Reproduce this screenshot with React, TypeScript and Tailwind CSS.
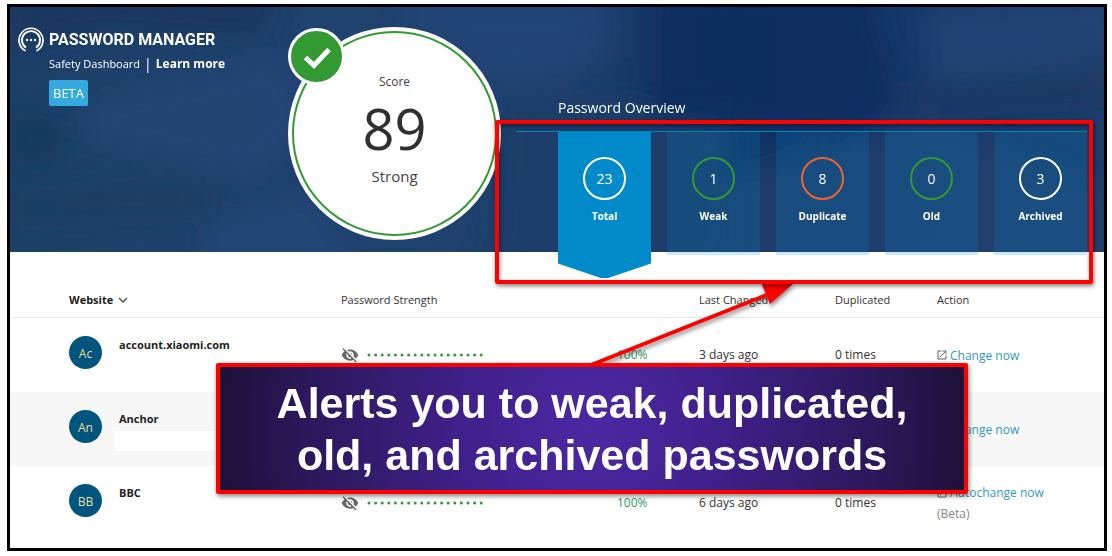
import { MdKeyboardArrowDown, MdVisibilityOff } from "react-icons/md";

type Tab = { count: number; label: string; ring: string; active?: boolean };

type Row = {
  initials: string;
  name: string;
  masked?: boolean;
  strength?: string;
  changed?: string;
  duplicated?: string;
  action: string;
  note?: string;
};

const tabs: Tab[] = [
  { count: 23, label: "Total", ring: "border-white", active: true },
  { count: 1, label: "Weak", ring: "border-[#339933]" },
  { count: 8, label: "Duplicate", ring: "border-[#f0622f]" },
  { count: 0, label: "Old", ring: "border-[#339933]" },
  { count: 3, label: "Archived", ring: "border-white" },
];

const rows: Row[] = [
  {
    initials: "Ac",
    name: "account.xiaomi.com",
    strength: "100%",
    changed: "3 days ago",
    duplicated: "0 times",
    action: "Change now",
  },
  { initials: "An", name: "Anchor", masked: true, action: "Change now" },
  {
    initials: "BB",
    name: "BBC",
    strength: "100%",
    changed: "6 days ago",
    duplicated: "0 times",
    action: "Autochange now",
    note: "(Beta)",
  },
];

function Backdrop() {
  return (
    <svg
      className="absolute inset-0 size-full"
      viewBox="0 0 1094 244"
      preserveAspectRatio="none"
      aria-hidden="true"
    >
      <defs>
        <linearGradient id="sky" x1="0" y1="0" x2="1" y2="0">
          <stop offset="0" stopColor="#1d4068" />
          <stop offset="0.3" stopColor="#20426f" />
          <stop offset="0.5" stopColor="#1f406c" />
          <stop offset="0.65" stopColor="#123364" />
          <stop offset="0.8" stopColor="#17386a" />
          <stop offset="1" stopColor="#1d3d6b" />
        </linearGradient>
        <filter id="soft" x="-20%" y="-20%" width="140%" height="140%">
          <feGaussianBlur stdDeviation="12" />
        </filter>
      </defs>
      <rect width="1094" height="244" fill="url(#sky)" />
      <g filter="url(#soft)">
        <path d="M0 -20H270L250 30L90 20L0 40Z" fill="#173560" opacity=".8" />
        <path d="M80 95L270 50L300 110L250 170L70 130Z" fill="#25487a" opacity=".6" />
        <path d="M0 100L60 115L50 150L0 160Z" fill="#16365c" opacity=".7" />
        <path d="M0 190L180 170L220 205L0 215Z" fill="#183a62" opacity=".7" />
        <path d="M200 215L300 190L340 260H190Z" fill="#24487a" opacity=".7" />
        <path d="M390 -10H600V50L500 80L400 30Z" fill="#25477a" opacity=".7" />
        <path d="M490 95H720V260H480Z" fill="#1d3c69" />
        <path d="M640 -20H860L890 90L850 130L640 110Z" fill="#0f2e5e" opacity=".9" />
        <path d="M915 5L1110 -10V45L1000 85L925 80Z" fill="#254777" opacity=".7" />
        <path d="M900 75L1110 60V90L900 105Z" fill="#17375f" opacity=".7" />
        <path d="M720 170L920 110L1110 190V260H720Z" fill="#24416f" opacity=".6" />
      </g>
    </svg>
  );
}

function BrandMark() {
  return (
    <svg className="size-[26px] shrink-0" viewBox="0 0 26 26" fill="none" stroke="white" aria-hidden="true">
      <path d="M7.5 23.9A12 12 0 1 1 18.5 23.9" strokeWidth="1.7" />
      <path d="M8 20.6A9 9 0 1 1 18 20.6" strokeWidth="1.9" />
      <g fill="white" stroke="none">
        <circle cx="9" cy="13" r="1.2" />
        <circle cx="13" cy="13" r="1.2" />
        <circle cx="17" cy="13" r="1.2" />
      </g>
    </svg>
  );
}

function Brand() {
  return (
    <div className="flex w-[278px] shrink-0 items-start gap-[5px] pl-2 text-white">
      <BrandMark />
      <div>
        <h1 className="font-[Roboto] text-[16px] leading-[25px] font-bold">PASSWORD MANAGER</h1>
        <p className="flex items-center gap-1 leading-6 whitespace-nowrap">
          <span className="text-[11px]">Safety Dashboard</span>
          <span className="text-[14px]">|</span>
          <a href="#learn" className="text-[12px] font-bold">Learn more</a>
        </p>
        <span className="mt-1 inline-block rounded-[2px] bg-[#34aae1] px-1 text-[13px] leading-[26px]">BETA</span>
      </div>
    </div>
  );
}

function Score() {
  return (
    <div className="relative size-[213px] shrink-0 rounded-full bg-white p-1">
      <div className="flex size-full flex-col items-center rounded-full border-2 border-[#339933] pt-[37px] text-[#444]">
        <span className="text-[12px] leading-6">Score</span>
        <strong className="text-[56px] leading-[68px] font-normal text-[#303030]">89</strong>
        <span className="text-[15px] leading-7">Strong</span>
      </div>
      <span className="absolute top-px left-0 flex size-[57px] items-center justify-center rounded-full border-3 border-white bg-[#339933]">
        <svg className="size-8" viewBox="0 0 32 32" fill="none" stroke="white" strokeWidth="5" aria-hidden="true">
          <path d="M4.5 16.5L13 24.5L28 8.5" />
        </svg>
      </span>
    </div>
  );
}

function Overview() {
  return (
    <section className="mr-[17px] -mb-[40px] ml-[15px] grow pt-[69px] text-white">
      <h2 className="mb-[11px] pl-[42px] text-[14px] leading-6">Password Overview</h2>
      <div className="flex items-start gap-4 border-t border-[#0083c4] pl-[42px]">
        {tabs.map((tab) => (
          <button
            key={tab.label}
            type="button"
            className={
              tab.active
                ? "flex h-[146px] flex-1 basis-0 flex-col items-center bg-[#008ac9] pt-[25px] [clip-path:polygon(0_0,100%_0,100%_90%,54%_100%,46%_100%,0_90%)]"
                : "flex h-[123px] flex-1 basis-0 flex-col items-center bg-[#008ac9]/20 pt-[25px]"
            }
          >
            <span className={`flex size-[43px] items-center justify-center rounded-full border-2 text-[14px] ${tab.ring}`}>
              {tab.count}
            </span>
            <span className="mt-2 text-[10px] leading-4 font-bold">{tab.label}</span>
          </button>
        ))}
      </div>
    </section>
  );
}

function Dots() {
  return (
    <svg className="h-1 w-[118px]" viewBox="0 0 118 4" fill="#339933" role="img" aria-label="Hidden password">
      {Array.from({ length: 18 }, (_, i) => (
        <circle key={i} cx={2 + i * 6.6} cy="2" r="1.5" />
      ))}
    </svg>
  );
}

function OpenIcon() {
  return (
    <svg className="size-[10px] shrink-0" viewBox="0 0 10 10" fill="none" stroke="#666" aria-hidden="true">
      <path d="M4.5 1H1V9H9V5.5M5.5 1H9V4.5M3 7L8.5 1.5" />
    </svg>
  );
}

function SiteTable() {
  return (
    <table className="w-full table-fixed text-left text-[12px] text-[#333]">
      <colgroup>
        <col className="w-[331px]" />
        <col className="w-[276px]" />
        <col className="w-[82px]" />
        <col className="w-[136px]" />
        <col className="w-[102px]" />
        <col />
      </colgroup>
      <thead>
        <tr className="border-b border-[#e6e6e6] text-[11px] leading-[18px]">
          <th className="pt-[39px] pb-2 pl-[59px]">
            <button type="button" className="flex items-center font-bold text-[#222]">
              Website <MdKeyboardArrowDown className="ml-px size-[18px] text-[#555]" />
            </button>
          </th>
          <th className="pt-[39px] pb-2 font-normal" colSpan={2}>Password Strength</th>
          <th className="pt-[39px] pb-2 font-normal">Last Changed</th>
          <th className="pt-[39px] pb-2 font-normal">Duplicated</th>
          <th className="pt-[39px] pb-2 font-normal">Action</th>
        </tr>
      </thead>
      <tbody>
        {rows.map((row) => (
          <tr key={row.name} className="h-[74px] even:bg-[#f7f7f7]">
            <td className="pb-[5px] pl-[59px]">
              <div className="flex items-start gap-3">
                <span className="flex size-[33px] shrink-0 items-center justify-center rounded-full bg-[#00557f] pt-1 text-[12px] text-[#e8dc98]">
                  {row.initials}
                </span>
                <div className="relative grow">
                  <strong className="block pl-[5px] text-[11px] leading-[18px] text-[#222]">{row.name}</strong>
                  {row.masked && <span className="absolute top-[21px] left-0 h-5 w-full bg-white" />}
                </div>
              </div>
            </td>
            <td>
              <div className="flex items-center gap-2">
                <button type="button" aria-label={`Show password for ${row.name}`}>
                  <MdVisibilityOff className="size-[18px] text-[#666]" />
                </button>
                <Dots />
              </div>
            </td>
            <td className="pt-px text-[#339966]">{row.strength}</td>
            <td className="pt-px">{row.changed}</td>
            <td className="pt-px">{row.duplicated}</td>
            <td className="pt-px leading-[21px]">
              <a href="#change" className="flex items-center gap-[3px] text-[#3399bb]">
                <OpenIcon /> {row.action}
              </a>
              {row.note && <span className="text-[#888]">{row.note}</span>}
            </td>
          </tr>
        ))}
      </tbody>
    </table>
  );
}

function Annotation() {
  return (
    <>
      <svg
        className="pointer-events-none absolute top-[270px] left-[580px] h-[100px] w-[220px] drop-shadow-[1px_3px_2px_rgba(0,0,0,0.45)]"
        viewBox="580 270 220 100"
        fill="#ff0000"
        aria-hidden="true"
      >
        <path d="M591 365L769 294" stroke="#ff0000" strokeWidth="4" />
        <path d="M761 282L770 304L794 283Z" />
      </svg>
      <div className="pointer-events-none absolute top-[120px] right-[19px] left-[495px] h-[164px] rounded-[2px] border-4 border-[#ff0000] shadow-[1px_2px_4px_rgba(0,0,0,0.5),inset_1px_2px_4px_rgba(0,0,0,0.4)]" />
      <p className="absolute top-[363px] left-[216px] w-[752px] rounded-[2px] border-4 border-[#ff0000] bg-[radial-gradient(circle_at_center,#4c28a4_0%,#40208a_35%,#2c185c_75%,#1e1038_100%)] pt-[10px] pb-[9px] text-center font-['Liberation_Sans',sans-serif] text-[43px] leading-[52px] font-bold text-white shadow-[1px_2px_5px_rgba(0,0,0,0.5)]">
        Alerts you to weak, duplicated,
        <br />
        old, and archived passwords
      </p>
    </>
  );
}

export default function App() {
  return (
    <div className="relative bg-white pt-1 pr-[5px] pb-1 pl-[7px] font-['Open_Sans',sans-serif]">
      <main className="border-3 border-black pb-2">
        <header className="relative flex items-start pt-5 pb-3">
          <Backdrop />
          <div className="relative flex w-full items-start">
            <Brand />
            <Score />
            <Overview />
          </div>
        </header>
        <SiteTable />
      </main>
      <Annotation />
    </div>
  );
}
